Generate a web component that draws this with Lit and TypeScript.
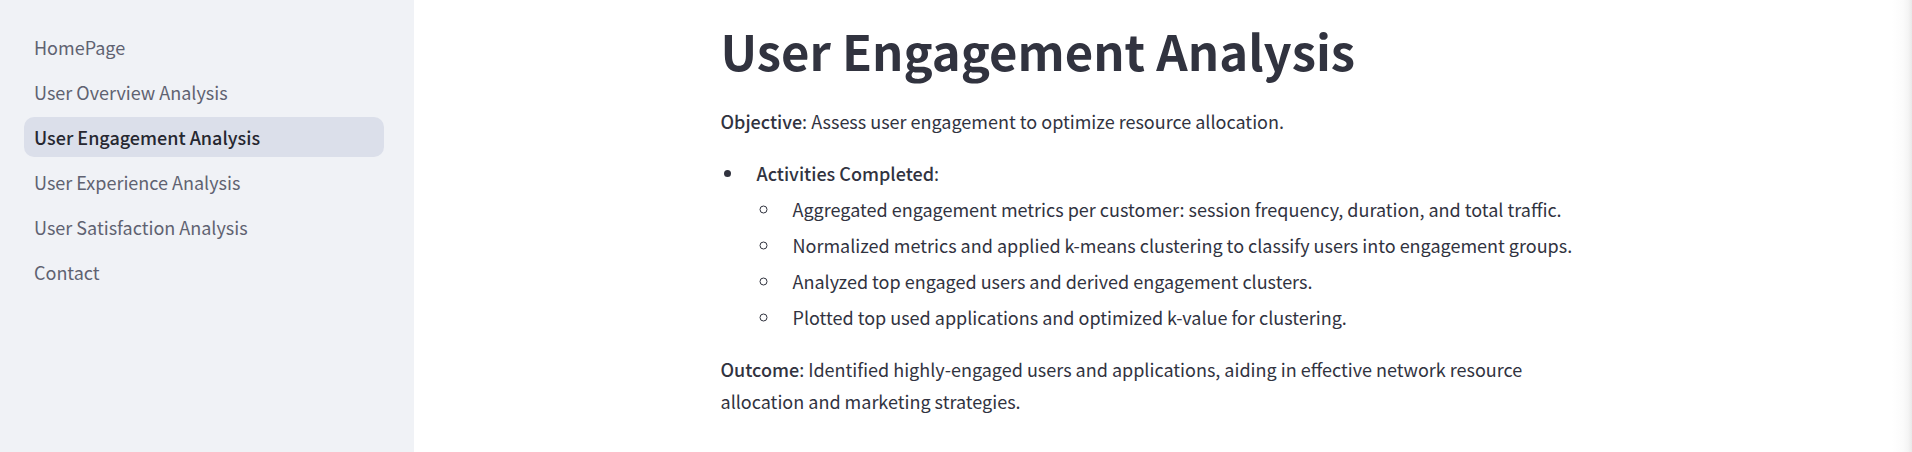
import { LitElement, html, css } from "lit";
import { customElement, state } from "lit/decorators.js";
import { classMap } from "lit/directives/class-map.js";

const PAGES = [
  "HomePage",
  "User Overview Analysis",
  "User Engagement Analysis",
  "User Experience Analysis",
  "User Satisfaction Analysis",
  "Contact",
];

const ACTIVITIES = [
  "Aggregated engagement metrics per customer: session frequency, duration, and total traffic.",
  "Normalized metrics and applied k-means clustering to classify users into engagement groups.",
  "Analyzed top engaged users and derived engagement clusters.",
  "Plotted top used applications and optimized k-value for clustering.",
];

@customElement("app-root")
export class AppRoot extends LitElement {
  static styles = css`
    :host {
      display: flex;
      min-height: 100vh;
      background: #ffffff;
      color: #31333f;
      font-family: "Source Sans Pro", "Noto Sans CJK SC", sans-serif;
      font-size: 18px;
      line-height: 32px;
    }
    .sidebar {
      box-sizing: border-box;
      flex: 0 0 414px;
      padding: 27px 30px 27px 24px;
      background: #f0f2f6;
    }
    .nav {
      display: flex;
      flex-direction: column;
      gap: 5px;
      margin: 0;
      padding: 0;
      list-style: none;
    }
    .link {
      display: block;
      padding: 0 10px;
      border-radius: 10px;
      color: #5f6271;
      line-height: 40px;
      text-decoration: none;
    }
    .link.active {
      background: #dbdfea;
      color: #262730;
      font-weight: 500;
    }
    .main {
      box-sizing: border-box;
      flex: 1;
      min-width: 0;
      padding: 17px 25px 32px 20px;
      background: linear-gradient(to left, #e9e9e9, #f5f5f5 4px, #fbfbfb 9px, #ffffff 20px);
    }
    .content {
      max-width: 880px;
      margin: 0 auto;
    }
    .title {
      margin: 0 0 23px;
      font-size: 49px;
      font-weight: 700;
      line-height: 65px;
    }
    .text {
      margin: 0 0 20px;
    }
    .list {
      margin: 0 0 20px;
      padding: 0;
    }
    .sublist {
      margin: 0;
      padding: 0;
    }
    .item {
      margin: 4px 0 4px 24px;
      padding-left: 12px;
    }
    .strong {
      font-weight: 500;
    }
  `;

  @state() private current = "User Engagement Analysis";

  private open(event: Event, page: string) {
    event.preventDefault();
    this.current = page;
  }

  render() {
    return html`
      <aside class="sidebar">
        <nav aria-label="Pages">
          <ul class="nav">
            ${PAGES.map(
              (page) => html`<li>
                <a
                  class=${classMap({ link: true, active: page === this.current })}
                  href="#"
                  aria-current=${page === this.current ? "page" : "false"}
                  @click=${(e: Event) => this.open(e, page)}
                  >${page}</a
                >
              </li>`
            )}
          </ul>
        </nav>
      </aside>
      <main class="main">
        <div class="content">
          <h1 class="title">User Engagement Analysis</h1>
          <p class="text">
            <strong class="strong">Objective</strong>: Assess user engagement to optimize resource
            allocation.
          </p>
          <ul class="list">
            <li class="item">
              <strong class="strong">Activities Completed</strong>:
              <ul class="sublist">
                ${ACTIVITIES.map((text) => html`<li class="item">${text}</li>`)}
              </ul>
            </li>
          </ul>
          <p class="text">
            <strong class="strong">Outcome</strong>: Identified highly-engaged users and
            applications, aiding in effective network resource allocation and marketing strategies.
          </p>
        </div>
      </main>
    `;
  }
}
